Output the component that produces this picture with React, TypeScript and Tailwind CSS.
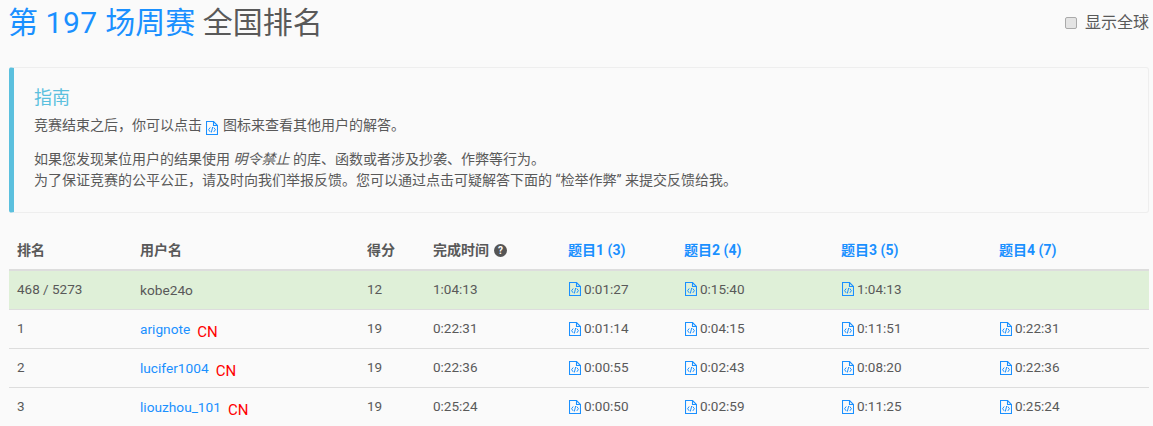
import React from 'react';

const font = "font-['Roboto','Noto_Sans_CJK_SC',sans-serif]";

function CodeIcon({ className = '' }: { className?: string }) {
  return (
    <svg viewBox="0 0 12 14" className={`inline-block w-3 h-3.5 shrink-0 ${className}`} fill="none" stroke="#1a90ff" strokeWidth="1.1">
      <path d="M1 .5h6.500L11.500 4.500V13.500H.500V.5z" />
      <path d="M7.500.5v4h4" />
      <path d="M4.200 6.500L2.600 8.700 4.200 10.900M7.800 6.500l1.600 2.200-1.600 2.200M6.700 6L5.300 11.500" strokeWidth="1" />
    </svg>
  );
}

function Time({ value }: { value?: string }) {
  if (!value) return null;
  return (
    <span className="flex items-center gap-[3px] pl-[1px]">
      <CodeIcon />
      {value}
    </span>
  );
}

const rows = [
  { rank: '468 / 5273', name: 'kobe24o', score: '12', finish: '1:04:13', q: ['0:01:27', '0:15:40', '1:04:13', ''], mine: true },
  { rank: '1', name: 'arignote', score: '19', finish: '0:22:31', q: ['0:01:14', '0:04:15', '0:11:51', '0:22:31'] },
  { rank: '2', name: 'lucifer1004', score: '19', finish: '0:22:36', q: ['0:00:55', '0:02:43', '0:08:20', '0:22:36'] },
  { rank: '3', name: 'liouzhou_101', score: '19', finish: '0:25:24', q: ['0:00:50', '0:02:59', '0:11:25', '0:25:24'] },
];

const heads = ['题目1 (3)', '题目2 (4)', '题目3 (5)', '题目4 (7)'];

export default function App() {
  return (
    <div className={`${font} h-[426px] overflow-hidden bg-[#fafafa] pl-[9px] pr-[4px] text-[14px] text-[#595959]`}>
      <div className="flex items-start justify-between">
        <h1 className="mt-[3px] -ml-[1px] text-[30px] leading-[40px] font-normal">
          <span className="text-[#1a90ff]">
            第 <span className="tracking-[0.6px]">197</span> 场周赛
          </span>{' '}
          全国排名
        </h1>
        <label className="mt-[12px] flex items-center gap-[8px] text-[16px] leading-[22px]">
          <span className="h-[12px] w-[12px] rounded-[2px] border border-[#aaaaaa] bg-[#e4e4e4]" />
          显示全球
        </label>
      </div>

      <div className="mt-[24px] h-[146px] rounded-[3px] border border-[#eeeeee] border-l-[5px] border-l-[#5bc0de] pt-[19px] pl-[20px]">
        <h4 className="text-[18px] leading-[22px] font-normal text-[#5bc0de]">指南</h4>
        <p className="mt-[6px] leading-[20px]">
          竞赛结束之后，你可以点击 <CodeIcon className="mx-[1px] -mb-[3px]" /> 图标来查看其他用户的解答。
        </p>
        <p className="mt-[14px] leading-[21px]">
          如果您发现某位用户的结果使用 <em>明令禁止</em> 的库、函数或者涉及抄袭、作弊等行为。
          <br />
          为了保证竞赛的公平公正，请及时向我们举报反馈。您可以通过点击可疑解答下面的 “检举作弊” 来提交反馈给我。
        </p>
      </div>

      <table className="mt-[19px] w-[1140px] table-fixed border-collapse">
        <colgroup>
          <col className="w-[123px]" />
          <col className="w-[227px]" />
          <col className="w-[66px]" />
          <col className="w-[135px]" />
          <col className="w-[116px]" />
          <col className="w-[157px]" />
          <col className="w-[158px]" />
          <col className="w-[158px]" />
        </colgroup>
        <thead>
          <tr className="h-[38px] border-b-2 border-[#dddddd] text-left font-bold">
            <th className="px-[8px]">排名</th>
            <th className="px-[8px]">用户名</th>
            <th className="px-[8px]">得分</th>
            <th className="px-[8px]">
              <span className="flex items-center gap-[5px]">
                完成时间
                <span className="flex h-[13px] w-[13px] items-center justify-center rounded-full bg-[#555555] text-[10px] leading-none text-white">?</span>
              </span>
            </th>
            {heads.map((h) => (
              <th key={h} className="px-[8px] text-[#1a90ff]">{h}</th>
            ))}
          </tr>
        </thead>
        <tbody className="text-[13.5px]">
          {rows.map((r) => {
            const cell = r.mine ? 'px-[8px] pb-[2px]' : 'px-[8px]';
            return (
              <tr key={r.rank} className={`h-[39px] border-b border-[#dddddd] ${r.mine ? 'bg-[#dff0d8]' : ''}`}>
                <td className={cell}>{r.rank}</td>
                <td className="px-[8px] pt-[2px] text-[13.7px]">
                  {r.mine ? (
                    r.name
                  ) : (
                    <span className="flex items-center gap-[7px]">
                      <span className="text-[#1a90ff]">{r.name}</span>
                      <span className="mt-[5px] text-[15px] text-[#ff0000]">CN</span>
                    </span>
                  )}
                </td>
                <td className={cell}>{r.score}</td>
                <td className={cell}>{r.finish}</td>
                {r.q.map((t, i) => (
                  <td key={i} className={cell}><Time value={t} /></td>
                ))}
              </tr>
            );
          })}
        </tbody>
      </table>
    </div>
  );
}
